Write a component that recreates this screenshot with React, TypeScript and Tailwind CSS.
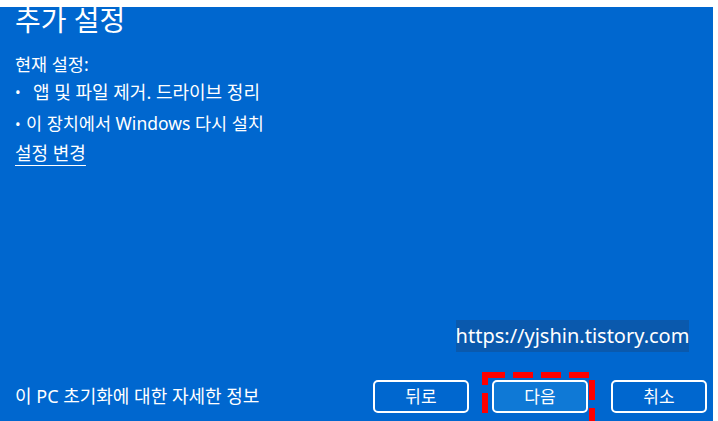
import React from "react";

const FONT = { fontFamily: '"Noto Sans", "Noto Sans CJK KR", sans-serif' };

function DialogButton({ label, active }: { label: string; active?: boolean }) {
  return (
    <button
      className={
        "w-[96px] h-[33px] rounded-[5px] border-2 border-white text-[17px] text-white leading-none " +
        (active ? "bg-[#0f79d6]" : "bg-transparent")
      }
    >
      {label}
    </button>
  );
}

export default function App() {
  return (
    <div className="w-[718px] h-[421px] bg-white pt-[7px] pr-[5px] overflow-hidden" style={FONT}>
      <div className="relative h-full bg-[#0067cf] text-white flex flex-col pl-[15px] pr-[6px]">
        {/* Header + current settings */}
        <h1 className="text-[28px] leading-none -mt-[2px] h-[30px] flex items-center">추가 설정</h1>
        <div className="mt-[21px] text-[17.5px] leading-none flex flex-col">
          <p className="h-[20px]">현재 설정:</p>
          <p className="mt-[5px] h-[22px] flex items-center text-[18px]">
            <span className="w-[18px] text-[15px]">•</span>
            <span>앱 및 파일 제거. 드라이브 정리</span>
          </p>
          <p className="mt-[10px] h-[22px] flex items-center">
            <span className="w-[11px] text-[15px]">•</span>
            <span>이 장치에서 Windows 다시 설치</span>
          </p>
          <a className="mt-[9px] h-[22px] underline underline-offset-[5px] decoration-1 w-fit text-[18px]">설정 변경</a>
        </div>

        <div className="flex-1" />

        {/* Footer */}
        <div className="flex items-center justify-between pb-[5px] h-[45px]">
          <span className="text-[18px] leading-none">이 PC 초기화에 대한 자세한 정보</span>
          <div className="flex gap-[23px] items-center">
            <DialogButton label="뒤로" />
            <DialogButton label="다음" active />
            <DialogButton label="취소" />
          </div>
        </div>

        {/* watermark */}
        <div className="absolute left-[456px] top-[313px] w-[233px] h-[32px] bg-[#0a59ad] flex items-center justify-center text-[20px] leading-none">
          https://yjshin.tistory.com
        </div>

        {/* red highlight around 다음 */}
        <svg className="absolute left-[482px] top-[365px]" width="113" height="52" viewBox="0 0 113 52">
          <rect x="3" y="3" width="107" height="52" fill="none" stroke="#ff0000" strokeWidth="6" strokeDasharray="20 8" />
        </svg>
      </div>
    </div>
  );
}
